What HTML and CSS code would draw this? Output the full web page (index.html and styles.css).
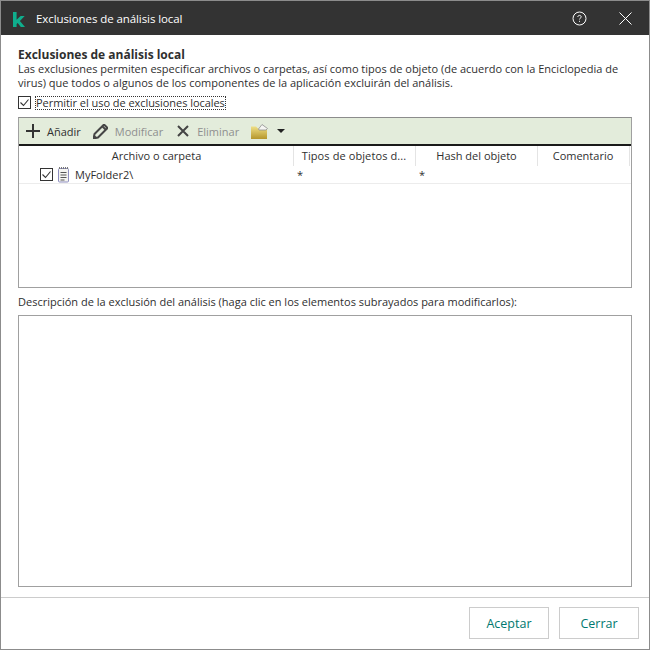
FILE: index.html
```html
<!DOCTYPE html>
<html lang="es">
<head>
<meta charset="utf-8">
<title>Exclusiones de análisis local</title>
<link rel="stylesheet" href="styles.css">
</head>
<body>
<div class="window">
  <header class="titlebar">
    <svg class="logo" width="12" height="15" viewBox="0 0 12 15"><path d="M0 0h3.600v7.800L7.600 4h4.100L6.900 8.900 12 15H7.800L4.700 10.900 3.600 12v3H0z" fill="#0fae8d"/></svg>
    <span class="title-text">Exclusiones de análisis local</span>
    <svg class="help" width="15" height="15" viewBox="0 0 15 15"><circle cx="7.500" cy="7.500" r="6.500" fill="none" stroke="#fff" stroke-width="1"/><path d="M5.800 6c0-1 .8-1.600 1.700-1.600S9.200 5 9.200 5.900c0 1.300-1.700 1.300-1.700 2.500" fill="none" stroke="#fff"/><rect x="7" y="9.800" width="1" height="1" fill="#fff"/></svg>
    <svg class="close" width="13" height="13" viewBox="0 0 13 13"><path d="M.5.5l12 12M12.500.5l-12 12" stroke="#fff" stroke-width="1"/></svg>
  </header>
  <main class="content">
    <h1 class="heading">Exclusiones de análisis local</h1>
    <p class="intro">Las exclusiones permiten especificar archivos o carpetas, así como tipos de objeto (de acuerdo con la Enciclopedia de virus) que todos o algunos de los componentes de la aplicación excluirán del análisis.</p>
    <label class="allow">
      <svg class="check" width="13" height="13" viewBox="0 0 13 13"><rect x=".5" y=".5" width="12" height="12" fill="#fff" stroke="#333"/><path d="M2.500 6.500l3 3 5-6" fill="none" stroke="#333" stroke-width="1.100"/></svg>
      <span class="allow-text">Permitir el uso de exclusiones locales</span>
    </label>
    <section class="list">
      <div class="toolbar">
        <span class="tool tool-add">
          <svg width="14" height="14" viewBox="0 0 14 14"><path d="M7 0v14M0 7h14" stroke="#333" stroke-width="2"/></svg>
          <span>Añadir</span>
        </span>
        <span class="tool tool-edit off">
          <svg width="15" height="15" viewBox="0 0 15 15"><path d="M11 .5L14.500 4 5 13.500.5 14.500l1-4.500z" fill="#e3ecdb" stroke="#454545" stroke-width="2" stroke-linejoin="round"/><path d="M9.500 2.500l3 3" stroke="#454545" stroke-width="2"/><path d="M.5 14.500l1-3.500 2.500 2.500z" fill="#454545"/></svg>
          <span>Modificar</span>
        </span>
        <span class="tool tool-del off">
          <svg width="12" height="12" viewBox="0 0 12 12"><path d="M1 1l10 10M11 1L1 11" stroke="#444" stroke-width="2"/></svg>
          <span>Eliminar</span>
        </span>
        <svg class="folder" width="17" height="15" viewBox="0 0 17 15"><defs><linearGradient id="gold" x1="0" y1="0" x2="0" y2="1"><stop offset="0" stop-color="#efdf85"/><stop offset="1" stop-color="#b5962c"/></linearGradient></defs><path d="M0 2.500h5L7 4.500h9V15H0z" fill="url(#gold)"/><path d="M7.500 5L11 .5 16.500 4.500 15 6H8z" fill="#f5f5f2" stroke="#8f8f8f" stroke-width=".8"/></svg>
        <svg class="caret" width="8" height="4" viewBox="0 0 8 4"><path d="M0 0h8L4 4z" fill="#222"/></svg>
      </div>
      <div class="cols">
        <div class="col col-file">Archivo o carpeta</div>
        <div class="col col-type">Tipos de objetos d...</div>
        <div class="col col-hash">Hash del objeto</div>
        <div class="col col-note">Comentario</div>
      </div>
      <div class="row">
        <div class="cell-file">
          <svg class="check" width="13" height="13" viewBox="0 0 13 13"><rect x=".5" y=".5" width="12" height="12" fill="#fff" stroke="#333"/><path d="M2.500 6.500l3 3 5-6" fill="none" stroke="#333" stroke-width="1.100"/></svg>
          <svg class="file" width="12" height="16" viewBox="0 0 12 16"><rect x=".5" y="1.500" width="10" height="13.500" rx="1" fill="#f4f4f0" stroke="#8f8fc0"/><path d="M2.500 5.500h6M2.500 8h6M2.500 10.500h6M2.500 13h4" stroke="#555"/><path d="M1 1h9" stroke="#777" stroke-width="2" stroke-dasharray="1 1"/></svg>
          <span>MyFolder2\</span>
        </div>
        <div class="cell-type">*</div>
        <div class="cell-hash">*</div>
      </div>
    </section>
    <p class="desc-label">Descripción de la exclusión del análisis (haga clic en los elementos subrayados para modificarlos):</p>
    <div class="desc-box"></div>
  </main>
  <footer class="footer">
    <button class="btn" type="button">Aceptar</button>
    <button class="btn" type="button">Cerrar</button>
  </footer>
</div>
</body>
</html>
```
FILE: styles.css
```css
* { box-sizing: border-box; }
html, body { margin: 0; height: 100%; }
body { font-family: "Open Sans", "Noto Sans", sans-serif; font-size: 11px; color: #2f2f2f; background: #fff; }
.window { width: 650px; height: 650px; display: flex; flex-direction: column; border: 1px solid #8c8c8c; }
.titlebar { height: 34px; flex: none; background: #333; color: #fff; display: flex; align-items: center; padding-left: 12px; font-size: 11.500px; letter-spacing: -.08px; }
.logo { margin-right: 11px; margin-top: 2px; }
.title-text { flex: 1; }
.help { margin-right: 32px; margin-left: 4px; }
.close { margin-right: 17px; }
.content { flex: 1; display: flex; flex-direction: column; padding: 12px 17px 10px; min-height: 0; }
.heading { margin: 0; font-size: 12px; font-weight: 700; line-height: 15px; }
.intro { margin: 0; line-height: 14px; }
.allow { display: flex; align-items: center; gap: 4px; margin-top: 6px; height: 13px; }
.allow-text { border: 1px dotted #333; line-height: 12px; height: 14px; letter-spacing: -.05px; }
.check { flex: none; }
.list { margin-top: 8px; height: 171px; flex: none; border: 1px solid #a0a0a0; border-top-color: #8c8c8c; }
.toolbar { height: 28px; background: #e3ecdb; border-bottom: 2px solid #1a1a1a; display: flex; align-items: center; padding-left: 7px; }
.tool { display: flex; align-items: center; gap: 7px; }
.tool-add { margin-right: 12px; }
.tool-edit { margin-right: 14px; }
.tool-del { margin-right: 12px; gap: 8px; }
.tool.off { color: #8f8f8f; }
.caret { margin-left: 9px; }
.cols { display: flex; height: 20px; }
.col { text-align: center; line-height: 20px; border-right: 1px solid #e4e4e4; height: 20px; white-space: nowrap; }
.col-file { width: 275px; padding-left: 1px; }
.col-type { width: 122px; letter-spacing: .1px; padding-right: 1px; }
.col-hash { width: 122px; }
.col-note { width: 92px; padding-right: 1px; }
.row { display: flex; height: 18px; border-bottom: 1px solid #ececec; align-items: center; }
.cell-file { width: 275px; padding-left: 21px; display: flex; align-items: center; gap: 5px; }
.cell-type { width: 122px; padding-left: 3px; }
.cell-hash { padding-left: 3px; }
.desc-label { margin: 7px 0 6px; line-height: 14px; }
.desc-box { flex: 1; border: 1px solid #a0a0a0; }
.footer { height: 52px; flex: none; border-top: 1px solid #ccc; display: flex; justify-content: flex-end; gap: 10px; padding: 9px 10px 0 0; }
.btn { width: 80px; height: 32px; background: #fff; border: 1px solid #ccc; font: inherit; font-size: 12.500px; letter-spacing: 0; color: #00786e; padding: 0; }
```
